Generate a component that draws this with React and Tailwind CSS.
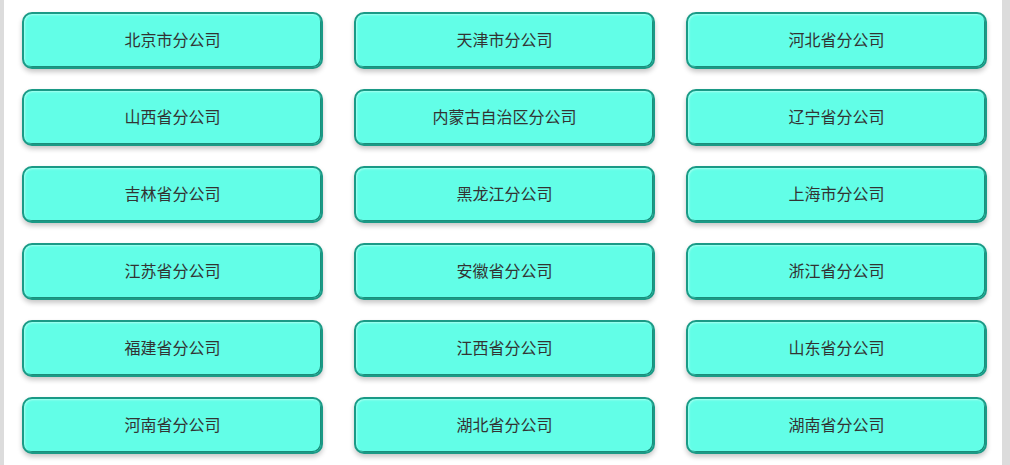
import React from "react";

const names = [
  "北京市分公司", "天津市分公司", "河北省分公司",
  "山西省分公司", "内蒙古自治区分公司", "辽宁省分公司",
  "吉林省分公司", "黑龙江分公司", "上海市分公司",
  "江苏省分公司", "安徽省分公司", "浙江省分公司",
  "福建省分公司", "江西省分公司", "山东省分公司",
  "河南省分公司", "湖北省分公司", "湖南省分公司",
];

export default function App() {
  return (
    <div className="w-[1010px] h-[465px] bg-[#dcdcdc] flex overflow-hidden" style={{ fontFamily: '"Noto Sans CJK SC", "Noto Sans", sans-serif' }}>
      <div className="ml-[4px] w-[998px] h-full bg-white pt-[12px] pl-[18px]">
        <div className="grid grid-cols-[301px_301px_301px] gap-x-[31px] gap-y-[20px]">
          {names.map((n) => (
            <div
              key={n}
              className="h-[57px] pb-[3px] rounded-[10px] border-[2px] border-[#1a9a86] bg-[#62fee7] shadow-[inset_1px_1px_2px_#a6fff0,inset_-1px_-1px_0_#138773,0_3px_5px_rgba(0,0,0,0.22)] flex items-center justify-center text-[16px] leading-[20px] text-[#333333]"
            >
              {n}
            </div>
          ))}
        </div>
      </div>
    </div>
  );
}
